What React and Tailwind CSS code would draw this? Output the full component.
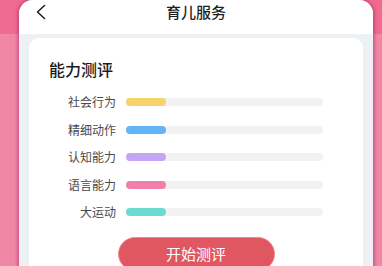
import React from 'react';

const skills = [
  { name: '社会行为', color: 'bg-[#f7d169]' },
  { name: '精细动作', color: 'bg-[#63b3f7]' },
  { name: '认知能力', color: 'bg-[#c2a6f6]' },
  { name: '语言能力', color: 'bg-[#f07fab]' },
  { name: '大运动', color: 'bg-[#6ddad2]' },
];

const App = () => {
  return (
    <div
      className="w-[382px] h-[266px] overflow-hidden bg-[linear-gradient(to_bottom,#ef6b90_0px,#ef6b90_34px,#f088a5_34px)] pl-[19px]"
      style={{ fontFamily: '"Noto Sans CJK SC", "Noto Sans", sans-serif' }}
    >
      <div className="w-[354px] h-[300px] rounded-t-[14px] bg-[#edf1f4] overflow-hidden shadow-[0_0_3px_2px_rgba(170,40,100,0.45)]">
        <div className="relative h-[34px] bg-white flex justify-center pt-[2px]">
          <svg
            className="absolute left-[16px] top-[4px]"
            width="12"
            height="16"
            viewBox="0 0 12 16"
            fill="none"
            stroke="#222"
            strokeWidth="1.6"
            strokeLinecap="round"
            strokeLinejoin="round"
          >
            <path d="M9.5 1.5 L2.5 8 L9.5 14.5" />
          </svg>
          <span className="text-[15px] leading-[20px] font-medium text-[#1f1f1f]">育儿服务</span>
        </div>

        <div className="mx-[10px] mt-[4px] rounded-[10px] bg-white pt-[19px] pl-[20px] pr-[40px] pb-[20px]">
          <h2 className="text-[16px] leading-[24px] font-medium text-[#1a1a1a]">能力测评</h2>
          <div className="mt-[7.5px]">
            {skills.map((s) => (
              <div key={s.name} className="h-[27.5px] flex items-center">
                <span className="w-[67px] text-right text-[12px] text-[#4a4a4a]">{s.name}</span>
                <div className="ml-[10px] flex-1 h-[8px] rounded-full bg-[#f2f2f2]">
                  <div className={`h-full w-[40px] rounded-full ${s.color}`} />
                </div>
              </div>
            ))}
          </div>
          <div className="mt-[11px] pl-[20px] flex justify-center">
            <button className="w-[157px] h-[34px] rounded-full bg-[#e05762] border border-[#f08a92] text-white text-[15px]">
              开始测评
            </button>
          </div>
        </div>
      </div>
    </div>
  );
};

export default App;
